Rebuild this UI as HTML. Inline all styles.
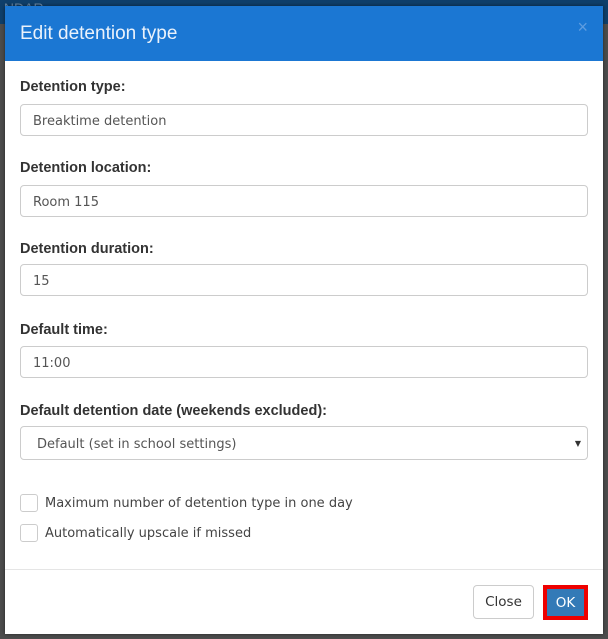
<!DOCTYPE html>
<html><head><style>
body{margin:0;width:608px;height:639px;background:#4d4d4d;position:relative;overflow:hidden;font-family:"Liberation Sans",sans-serif;}
.top{position:absolute;left:0;top:0;width:608px;height:24px;background:#0f3f6b;color:#6a8aa8;font-size:14px;}
.modal{position:absolute;left:5px;top:6px;width:598px;height:628px;background:#fff;box-shadow:0 0 4px rgba(0,0,0,.5);}
.hd{height:55px;background:#1b77d3;color:#eaf2fb;font-size:19px;line-height:55px;padding-left:15px;position:relative;}
.x{position:absolute;right:15px;top:-6px;color:#5f9de0;font-size:18px;}
label{position:absolute;left:15px;font-size:14.5px;font-weight:bold;color:#333;}
.in{position:absolute;left:15px;width:568px;height:32px;border:1px solid #ccc;border-radius:4px;box-sizing:border-box;font-family:"DejaVu Sans",sans-serif;font-size:13px;color:#555;line-height:33px;padding-left:12px;}
.cb{position:absolute;left:15px;width:16px;height:16px;border:1px solid #ccc;border-radius:3px;}
.cl{position:absolute;left:40px;font-family:"DejaVu Sans",sans-serif;font-size:13px;color:#444;}
.ft{position:absolute;left:0;top:563px;width:598px;border-top:1px solid #e5e5e5;}
.btn{position:absolute;font-family:"DejaVu Sans",sans-serif;font-size:13.5px;border-radius:4px;box-sizing:border-box;text-align:center;}
</style></head><body>
<div class="top">&nbsp;NDAR</div>
<div class="modal">
<div class="hd">Edit detention type<span class="x">×</span></div>
<label style="top:73px">Detention type:</label>
<div class="in" style="top:98px">Breaktime detention</div>
<label style="top:154px">Detention location:</label>
<div class="in" style="top:179px">Room 115</div>
<label style="top:235px">Detention duration:</label>
<div class="in" style="top:258px">15</div>
<label style="top:316px">Default time:</label>
<div class="in" style="top:340px">11:00</div>
<label style="top:397px">Default detention date (weekends excluded):</label>
<div class="in" style="top:420px;height:34px;line-height:35px;padding-left:16px">Default (set in school settings)<span style="position:absolute;right:6px;top:-1px;font-size:8px;color:#333">▼</span></div>
<div class="cb" style="top:488px"></div><div class="cl" style="top:490px">Maximum number of detention type in one day</div>
<div class="cb" style="top:518px"></div><div class="cl" style="top:520px">Automatically upscale if missed</div>
<div class="ft"></div>
<div class="btn" style="left:468px;top:579px;width:61px;height:34px;border:1px solid #ccc;line-height:33px;color:#333">Close</div>
<div class="btn" style="left:538px;top:579px;width:45px;height:35px;border:4px solid #e00;border-radius:0;background:#337ab7;color:#fff;line-height:28px">OK</div>
</div>
</body></html>
